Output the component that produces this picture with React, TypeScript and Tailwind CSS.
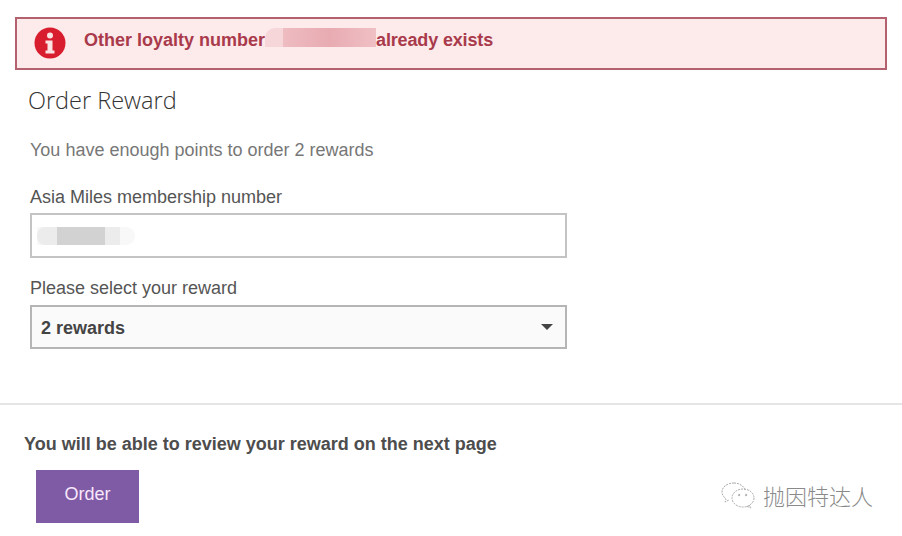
export default function App() {
  return (
    <main className="w-[902px] h-[536px] overflow-hidden bg-white font-['Liberation_Sans',sans-serif] text-[#555]">
      {/* Error banner */}
      <div className="mx-[15px] mt-[17px] h-[53px] border-2 border-[#b4616f] bg-[#fdeaea] flex items-center pl-[17px]">
        <svg width="32" height="32" viewBox="0 0 32 32" className="mr-[18px] -mt-[1px] shrink-0">
          <circle cx="16" cy="16" r="15.5" fill="#d81e2e" />
          <circle cx="16" cy="8.5" r="3" fill="#fbe3e3" />
          <path d="M11.5 13.5h7v10h2v3h-9v-3h2v-7h-2z" fill="#fbe3e3" />
        </svg>
        <span className="text-[18px] font-bold text-[#a93a4c] -mt-[6px]">Other loyalty number</span>
        <div className="w-[111px] h-[19px] self-start mt-[9px] rounded-t-[10px] bg-[#f6d6d9] flex justify-end shrink-0">
          <div className="w-[93px] h-[19px] bg-gradient-to-r from-[#eebcc1] via-[#e8abb2] to-[#efc0c5]" />
        </div>
        <span className="text-[18px] font-bold text-[#a93a4c] -mt-[6px] tracking-[-0.15px]">already exists</span>
      </div>

      <div className="pl-[30px]">
        <h1 className="-ml-[2px] mt-[14px] h-[32px] font-['Open_Sans',sans-serif] font-light text-[23.5px] leading-[32px] text-[#333]">Order Reward</h1>
        <p className="mt-[23px] h-[22px] text-[18px] leading-[22px] text-[#777]">You have enough points to order 2 rewards</p>

        <label className="block mt-[25px] h-[22px] text-[18px] leading-[22px]">Asia Miles membership number</label>
        <div className="mt-[5px] w-[537px] h-[45px] border-2 border-[#c4c4c4] bg-white flex items-center pl-[5px]">
          <div className="w-[98px] h-[18px] rounded-r-full bg-[#f8f8f8]">
            <div className="w-[83px] h-[18px] rounded-l-[8px] bg-[#ececec] flex pl-[20px]">
              <div className="w-[48px] h-[18px] bg-[#d2d2d2]" />
            </div>
          </div>
        </div>

        <label className="block mt-[19px] h-[22px] text-[18px] leading-[22px]">Please select your reward</label>
        <div className="mt-[6px] w-[537px] h-[44px] border-2 border-[#b5b5b5] bg-[#fafafa] flex items-center justify-between pl-[9px] pr-[12px]">
          <span className="text-[18px] font-bold text-[#444] pt-[3px]">2 rewards</span>
          <div className="w-0 h-0 border-x-[6px] border-x-transparent border-t-[6px] border-t-[#444]" />
        </div>
      </div>

      <div className="mt-[54px] h-[2px] bg-[#e5e5e5]" />

      <div className="pl-[24px] flex items-end justify-between">
        <div>
          <p className="mt-[28px] h-[22px] text-[18px] leading-[22px] font-bold text-[#4d4d4d]">You will be able to review your reward on the next page</p>
          <button className="mt-[15px] ml-[12px] block w-[103px] h-[53px] pb-[5px] bg-[#7f5aa5] text-[#f8e8fb] text-[18px]">Order</button>
        </div>
        <div className="flex items-center pr-[29px] mb-[13px]">
          <svg width="36" height="30" viewBox="0 0 36 30" fill="none" stroke="#aaa" strokeWidth="1" strokeDasharray="2 1" className="mr-[7px]">
            <path d="M14 3C7 3 2 7 2 12c0 3 2 5 4 7l-1 3 4-2" />
            <path d="M14 3c5 0 10 3 11 7" />
            <ellipse cx="23" cy="18" rx="11" ry="9" />
            <path d="M29 25l2 3-5-2" />
            <circle cx="19" cy="15" r="0.8" fill="#aaa" />
            <circle cx="26" cy="15" r="0.8" fill="#aaa" />
          </svg>
          <span className="text-[22px] leading-[28px] font-['Noto_Sans_CJK_SC',sans-serif] font-light text-[#8a8a8a]">抛因特达人</span>
        </div>
      </div>
    </main>
  );
}
